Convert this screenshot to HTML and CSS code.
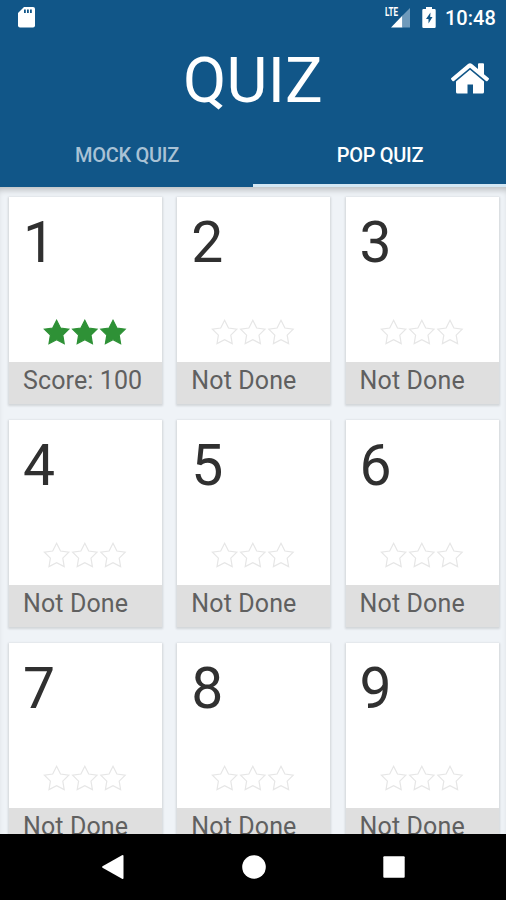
FILE: index.html
```html
<!DOCTYPE html>
<html lang="en">
<head>
    <meta charset="UTF-8">
    <meta name="viewport" content="width=device-width, initial-scale=1.0">
    <title>Quiz</title>
    <link rel="stylesheet" href="styles.css">
</head>
<body>

    <header class="header">
        <div class="status-bar">
            <svg class="sd-icon" width="17" height="21" viewBox="0 0 17 21">
                <path fill="#fff" d="M6 0h9a2 2 0 0 1 2 2v16.500a2 2 0 0 1-2 2H2a2 2 0 0 1-2-2V6z"/>
                <path fill="#115688" d="M6 2.500h1.800v3.500H6zM9 2.500h1.800v3.500H9zM12 2.500h1.800v3.500H12z"/>
            </svg>
            <div class="status-right">
                <svg class="signal-icon" width="26" height="22" viewBox="0 0 26 22">
                    <path fill="#fff" d="M6 20.500L17.500 8.500v12z"/>
                    <path fill="#6f9abb" d="M17.500 8.500L25 1v19.500h-7.500z"/>
                    <text x="0" y="9.300" class="lte" textLength="13" lengthAdjust="spacingAndGlyphs">LTE</text>
                </svg>
                <svg class="battery-icon" width="14" height="22" viewBox="0 0 14 22">
                    <path fill="#fff" d="M4 0h6v2h2.500q1.200 0 1.200 1.200v16.500q0 1.300-1.200 1.300h-11Q.3 21 .3 19.700v-16.500Q.3 2 1.500 2H4z"/>
                    <path fill="#115688" d="M8.500 5.500L4 12h2.500v4.500l4-6.500H8.200z"/>
                </svg>
                <span class="clock">10:48</span>
            </div>
        </div>
        <div class="title-bar">
            <h1>QUIZ</h1>
            <svg class="home-icon" width="38" height="32" viewBox="0 0 38 32">
                <path fill="#fff" d="M19 6.800L33 18.500V29q0 1.500-1.500 1.500H22v-9h-5.500v9h-10Q5 30.500 5 29V18.500z"/>
                <path fill="#fff" d="M17 .9q2-1.500 4 0L27 6V1.200q0-1 1-1h4q1 0 1 1v10l4.600 3.900q.8.700.1 1.500l-1.200 1.300q-.7.700-1.500.1L19 4.800 3 18q-.8.600-1.500-.1L.3 16.600q-.7-.8.1-1.500z"/>
            </svg>
        </div>
        <nav class="tabs">
            <a class="tab">MOCK QUIZ</a>
            <a class="tab active">POP QUIZ</a>
        </nav>
    </header>

    <main class="grid">
        <div class="card done">
            <div class="number">1</div>
            <svg class="stars" viewBox="0 0 84 26"><use href="#stars"/></svg>
            <div class="result">Score: 100</div>
        </div>
        <div class="card">
            <div class="number">2</div>
            <svg class="stars" viewBox="0 0 84 26"><use href="#stars"/></svg>
            <div class="result">Not Done</div>
        </div>
        <div class="card">
            <div class="number">3</div>
            <svg class="stars" viewBox="0 0 84 26"><use href="#stars"/></svg>
            <div class="result">Not Done</div>
        </div>
        <div class="card">
            <div class="number">4</div>
            <svg class="stars" viewBox="0 0 84 26"><use href="#stars"/></svg>
            <div class="result">Not Done</div>
        </div>
        <div class="card">
            <div class="number">5</div>
            <svg class="stars" viewBox="0 0 84 26"><use href="#stars"/></svg>
            <div class="result">Not Done</div>
        </div>
        <div class="card">
            <div class="number">6</div>
            <svg class="stars" viewBox="0 0 84 26"><use href="#stars"/></svg>
            <div class="result">Not Done</div>
        </div>
        <div class="card">
            <div class="number">7</div>
            <svg class="stars" viewBox="0 0 84 26"><use href="#stars"/></svg>
            <div class="result">Not Done</div>
        </div>
        <div class="card">
            <div class="number">8</div>
            <svg class="stars" viewBox="0 0 84 26"><use href="#stars"/></svg>
            <div class="result">Not Done</div>
        </div>
        <div class="card">
            <div class="number">9</div>
            <svg class="stars" viewBox="0 0 84 26"><use href="#stars"/></svg>
            <div class="result">Not Done</div>
        </div>
    </main>

    <footer class="nav-bar">
        <svg width="24" height="26" viewBox="0 0 24 26"><path fill="#fff" d="M21 1.300q1.500-.8 1.500.8v21.800q0 1.600-1.500.8L1.500 13.800q-1-.8 0-1.600z"/></svg>
        <svg width="24" height="24" viewBox="0 0 24 24"><circle cx="12" cy="12" r="11.800" fill="#fff"/></svg>
        <svg width="24" height="24" viewBox="0 0 24 24"><rect x="1.300" y="1.300" width="21.400" height="21.400" rx="1" fill="#fff"/></svg>
    </footer>

    <svg class="defs" width="0" height="0">
        <defs>
            <path id="star" d="M13.600 1.300L17.500 9l8.300 1.200-6 5.900 1.400 8.500-7.600-4-7.600 4 1.400-8.500-6-5.900L9.700 9z"/>
            <g id="stars">
                <use href="#star"/>
                <use href="#star" x="28.200"/>
                <use href="#star" x="56.400"/>
            </g>
        </defs>
    </svg>

</body>
</html>
```

FILE: styles.css
```css
* {
    box-sizing: border-box;
}
body {
    margin: 0;
    height: 900px;
    display: flex;
    flex-direction: column;
    overflow: hidden;
    font-family: Roboto, "Liberation Sans", sans-serif;
    background-color: #eff3f7;
}
.header {
    flex: none;
    height: 187px;
    background-color: #115688;
    color: white;
}
.status-bar {
    display: flex;
    justify-content: space-between;
    height: 36px;
    padding: 7px 11px 0 18px;
}
.status-right {
    display: flex;
}
.signal-icon {
    margin-right: 11px;
}
.battery-icon {
    margin-right: 9px;
}
.lte {
    fill: white;
    font-size: 12.5px;
    font-weight: 700;
}
.clock {
    width: 50px;
    font-size: 20px;
    font-weight: 500;
    line-height: 23px;
    white-space: nowrap;
}
.title-bar {
    display: grid;
    grid-template-columns: 55px 1fr 55px;
    height: 86px;
    align-items: center;
}
h1 {
    grid-column: 2;
    margin: 0;
    padding-top: 2px;
    font-size: 63px;
    font-weight: 400;
    letter-spacing: 0.2px;
    line-height: 86px;
    text-align: center;
}
.home-icon {
    margin-top: -2px;
}
.tabs {
    display: flex;
    height: 65px;
}
.tab {
    flex: 1;
    display: flex;
    align-items: center;
    justify-content: center;
    padding: 3px 0 0 1px;
    border-bottom: 3px solid #115688;
    font-size: 20px;
    font-weight: 500;
    letter-spacing: -0.3px;
    color: #a9c2d5;
}
.tab.active {
    color: white;
    border-bottom-color: #d3e7f4;
}
.grid {
    flex: 1;
    min-height: 0;
    overflow: hidden;
    display: grid;
    grid-template-columns: repeat(3, 153px);
    grid-auto-rows: 207px;
    gap: 16px 15.3px;
    padding: 10px 0 0 9px;
    /* shadow cast by the header */
    box-shadow: inset 0 6px 6px -3px rgba(0, 0, 0, 0.22);
}
.card {
    display: flex;
    flex-direction: column;
    background-color: white;
    box-shadow: 0 1px 2px 1px rgba(0, 0, 0, 0.12);
}
.number {
    padding-left: 14px;
    font-size: 57px;
    line-height: 91px;
    height: 122px;
    color: #303030;
}
.stars {
    width: 84px;
    height: 26px;
    margin-left: 34px;
    overflow: visible;
    fill: none;
    stroke: #e6e6e6;
    stroke-width: 1.2;
}
.done .stars {
    fill: #2e9136;
    stroke: #2e9136;
}
.result {
    height: 42px;
    margin-top: auto;
    padding-left: 14px;
    background-color: #dfdfdf;
    color: #606060;
    font-size: 25px;
    letter-spacing: 0.12px;
    line-height: 37px;
    white-space: nowrap;
}
.nav-bar {
    flex: none;
    display: flex;
    justify-content: space-between;
    align-items: center;
    height: 66px;
    padding: 0 100px 0 101px;
    background-color: black;
}
.defs {
    position: absolute;
}
```
